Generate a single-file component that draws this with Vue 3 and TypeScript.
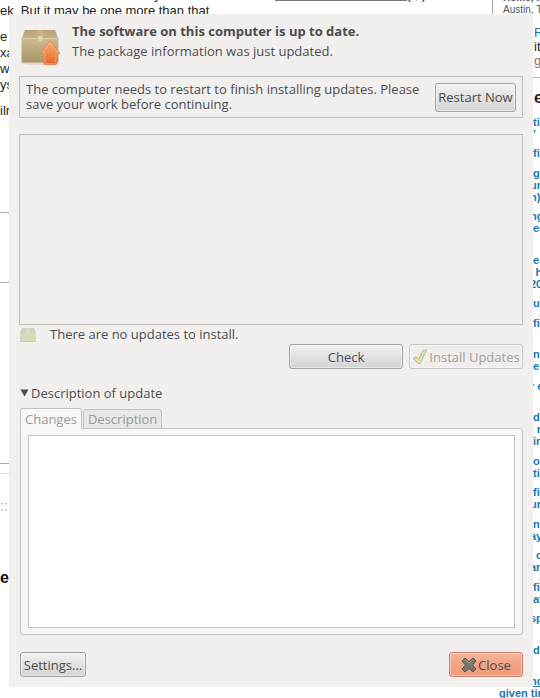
<script setup lang="ts">
import { ref } from 'vue'

type Tab = 'changes' | 'description'

interface Line {
  text: string
  tucked?: boolean
}

const activeTab = ref<Tab>('changes')
const expanded = ref(true)
const notes = ref('')

const leftLines: string[] = ['e', 'xa', 'w', 'ys']

// Tucked lines start a little further under the dialog's edge.
const linkGroups: Line[][] = [
  [{ text: 'ti' }, { text: '’' }],
  [{ text: 'fi' }],
  [{ text: 'g' }, { text: 'ur', tucked: true }, { text: 'n)', tucked: true }],
  [{ text: 'ng', tucked: true }, { text: 'er' }, { text: '' }],
  [{ text: 'e' }, { text: '’ h', tucked: true }, { text: '20', tucked: true }],
  [{ text: 'u' }],
  [{ text: 'fi' }, { text: '' }],
  [{ text: 'n' }, { text: 'e' }],
  [{ text: 'r e', tucked: true }, { text: '' }],
  [{ text: 'd' }, { text: ': r', tucked: true }, { text: 'in' }],
  [{ text: 'o' }, { text: 'ti' }],
  [{ text: 'fi' }, { text: 'ur', tucked: true }],
  [{ text: 'n' }, { text: 'ay', tucked: true }],
  [{ text: ', c', tucked: true }, { text: 'ar', tucked: true }],
  [{ text: 'fi' }, { text: 'at' }],
  [{ text: 'sp', tucked: true }, { text: '' }],
  [{ text: 'd' }, { text: '' }],
]
</script>

<template>
  <div class="desktop">
    <div class="page">
      <div class="article">
        <p class="cut-line"><span>y</span><u></u><span>( , )</span></p>
        <p class="lead"><span>ek</span><span>But it may be one more than that</span></p>
        <div class="left-lines">
          <p v-for="line in leftLines" :key="line">{{ line }}</p>
          <p class="spaced">ilr</p>
        </div>
        <div class="box box-a"></div>
        <div class="box box-b"></div>
        <div class="box box-c"></div>
        <div class="box box-d"></div>
        <div class="grip">::</div>
        <p class="left-heading">e</p>
      </div>
      <div class="sidebar">
        <div class="place">
          <p class="place-name">Home, in</p>
          <p>Austin, T</p>
        </div>
        <div class="card">
          <p class="card-name">R</p>
          <p class="card-text">it</p>
          <p class="card-meta">g</p>
        </div>
        <p class="side-heading">e</p>
        <div class="links">
          <div v-for="(group, i) in linkGroups" :key="i" class="link-group">
            <p v-for="(line, j) in group" :key="j" :class="{ tucked: line.tucked }">{{ line.text }}</p>
          </div>
          <div class="link-group">
            <p class="tucked"><u>nd</u></p>
            <p class="given">given tim</p>
          </div>
        </div>
      </div>
    </div>

    <main class="dialog">
      <header class="head">
        <svg class="package" viewBox="0 0 42 40" aria-hidden="true">
          <defs>
            <linearGradient id="box" x1="0" y1="0" x2="0" y2="1">
              <stop offset="0" stop-color="#cdbc94" />
              <stop offset="1" stop-color="#ab9469" />
            </linearGradient>
            <linearGradient id="lid" x1="0" y1="0" x2="0" y2="1">
              <stop offset="0" stop-color="#b99f78" />
              <stop offset="1" stop-color="#c8b28a" />
            </linearGradient>
            <linearGradient id="arrow" x1="0" y1="0" x2="0" y2="1">
              <stop offset="0" stop-color="#fbb07c" />
              <stop offset="0.5" stop-color="#f48c4c" />
              <stop offset="1" stop-color="#e2622a" />
            </linearGradient>
          </defs>
          <ellipse cx="21" cy="36" rx="20" ry="2" fill="#dedad4" />
          <path d="M2.500 11H39.500V34Q39.500 35.500 38 35.500H4Q2.500 35.500 2.500 34Z" fill="url(#box)" />
          <path d="M6 3H36L39.500 11.500H2.500Z" fill="url(#lid)" />
          <path d="M3 11.500H39" stroke="#d9c9a4" />
          <path d="M18 3H24L24.500 11H17.500Z" fill="#c8b189" />
          <path d="M19 9H23.500V14L22.500 13.500L21 15L20 13.500L19 14Z" fill="#e6d6ac" />
          <path d="M31 13.500L41 26.500H37.500V37.500H25V26.500H21.500Z" fill="url(#arrow)" stroke="#ec8248" stroke-width=".8" stroke-linejoin="round" />
          <path d="M31 15.500L39 25.500H36.500V36.500H26V25.500H23.500Z" fill="none" stroke="#ffc9a0" stroke-opacity=".45" />
        </svg>
        <div>
          <h1>The software on this computer is up to date.</h1>
          <p>The package information was just updated.</p>
        </div>
      </header>

      <section class="notice">
        <p>The computer needs to restart to finish installing updates. Please save your work before continuing.</p>
        <button type="button" class="btn restart">Restart Now</button>
      </section>

      <section class="updates" aria-label="Updates"></section>

      <div class="status">
        <svg class="mini" viewBox="0 0 16 14" aria-hidden="true">
          <path d="M2 0H14L16 5V13H0V5Z" fill="#d8d8c0" />
          <path d="M2 0H14L16 5H0Z" fill="#d3d0c6" />
          <path d="M7 0H9L10 6H6Z" fill="#dedbc4" />
          <path d="M3 13L8 9L13 4L16 6V13Z" fill="#dcdcac" />
          <path d="M0 13.500H16" stroke="#c9c9b8" />
        </svg>
        <p>There are no updates to install.</p>
      </div>

      <div class="actions">
        <button type="button" class="btn">Check</button>
        <button type="button" class="btn" disabled>
          <svg class="tick" viewBox="0 0 16 16" aria-hidden="true">
            <path d="M1.500 9.500L4 7.500L6.500 10.500L11 1.500L14.500 1L8 14.500H6Z" fill="#e0e6a6" stroke="#b3b98e" stroke-linejoin="round" />
          </svg>
          <span>Install Updates</span>
        </button>
      </div>

      <button type="button" class="expander" :aria-expanded="expanded" @click="expanded = !expanded">
        <svg viewBox="0 0 9 8" aria-hidden="true"><path d="M0.500 0.500H8.500L4.500 7.500Z" fill="#4c4c4c" /></svg>
        <span>Description of update</span>
      </button>

      <div class="tabs" role="tablist">
        <button type="button" role="tab" class="tab" :class="{ active: activeTab === 'changes' }" :aria-selected="activeTab === 'changes'" @click="activeTab = 'changes'">Changes</button>
        <button type="button" role="tab" class="tab" :class="{ active: activeTab === 'description' }" :aria-selected="activeTab === 'description'" @click="activeTab = 'description'">Description</button>
      </div>
      <section class="panel">
        <textarea v-model="notes" aria-label="Changes" readonly></textarea>
      </section>

      <footer class="foot">
        <button type="button" class="btn settings">Settings...</button>
        <button type="button" class="btn close">
          <svg class="cross" viewBox="0 0 16 16" aria-hidden="true">
            <path d="M4 1L8 4.500L12 1L15 4L11.500 8L15 12L12 15L8 11.500L4 15L1 12L4.500 8L1 4Z" fill="#77766a" stroke="#55504a" stroke-linejoin="round" />
            <path d="M4 2.500L8 6L12 2.500" fill="none" stroke="#a3a195" />
          </svg>
          <span>Close</span>
        </button>
      </footer>
    </main>
  </div>
</template>

<style>
body {
  margin: 0;
  background: #fff;
}
</style>

<style scoped>
* {
  box-sizing: border-box;
}
p,
h1 {
  margin: 0;
}
.desktop {
  position: relative;
  min-height: 100vh;
  padding: 14px 7px 11px 9px;
  overflow: hidden;
  background: #fff;
}

/* Web page behind the dialog */
.page {
  position: absolute;
  inset: 0;
  display: flex;
  overflow: hidden;
  white-space: nowrap;
  font-family: "Liberation Sans", Arial, sans-serif;
  font-size: 13px;
  color: #222;
}
.article {
  flex: 1;
  min-width: 0;
}
.cut-line {
  display: flex;
  height: 3px;
  padding-left: 154px;
  overflow: hidden;
  line-height: 16px;
  align-items: flex-end;
}
.cut-line u {
  align-self: flex-start;
  width: 132px;
  height: 1px;
  margin-left: 114px;
  background: #777;
}
.lead {
  display: flex;
  gap: 7px;
  height: 26px;
  line-height: 16px;
}
.left-lines p {
  height: 16px;
  line-height: 16px;
}
.left-lines .spaced {
  margin-top: 10px;
}
.box {
  width: 10px;
  border-bottom: 1px solid #aaa;
}
.box-a {
  height: 94px;
}
.box-b {
  height: 70px;
}
.box-c {
  height: 181px;
}
.box-d {
  height: 10px;
  border-bottom-color: #ddd;
}
.grip {
  height: 94px;
  padding-top: 22px;
  font-size: 14px;
  line-height: 20px;
  color: #aaa;
}
.left-heading {
  font-size: 16px;
  font-weight: bold;
  line-height: 20px;
  color: #111;
}
.sidebar {
  width: 48px;
}
.place {
  width: 48px;
  height: 26px;
  padding-left: 10px;
  border-left: 1px solid #aaa;
  font-size: 10px;
  line-height: 12px;
  color: #555;
}
.place-name {
  display: flex;
  align-items: flex-end;
  height: 4px;
  overflow: hidden;
  font-weight: bold;
}
.card {
  height: 52px;
  padding-left: 42px;
  border-bottom: 1px solid #bbb;
  line-height: 14px;
}
.card-name {
  color: #1a78ad;
}
.card-meta {
  color: #777;
}
.side-heading {
  height: 38px;
  padding-left: 42px;
  font-size: 16px;
  font-weight: bold;
  line-height: 40px;
}
.links {
  padding-left: 41px;
  font-size: 11px;
  font-weight: bold;
  line-height: 12px;
  color: #1a78ad;
}
.link-group {
  margin-bottom: 7px;
}
.link-group:nth-child(even) {
  margin-bottom: 8px;
}
.link-group p {
  height: 12px;
}
.link-group .tucked {
  margin-left: -3px;
}
.link-group .given {
  margin-left: -34px;
}

/* Dialog */
.dialog {
  position: relative;
  display: flex;
  flex-direction: column;
  min-height: calc(100vh - 25px);
  padding: 9px 10px 10px 10px;
  background: #f1f0ef;
  color: #4c4c4c;
  font-family: "Open Sans", "Noto Sans", sans-serif;
  font-size: 13px;
  line-height: 16px;
}
.head {
  display: flex;
  gap: 11px;
  height: 53px;
}
.package {
  width: 42px;
  height: 40px;
  margin-top: 4px;
}
.head h1 {
  font-size: 13px;
  font-weight: bold;
  line-height: 16px;
  margin-bottom: 4px;
}
.notice {
  display: flex;
  align-items: center;
  gap: 4px;
  height: 42px;
  padding: 0 6px;
  border: 1px solid #c4c2c0;
}
.notice p {
  flex: 1;
  line-height: 15px;
}
.btn {
  display: inline-flex;
  align-items: center;
  justify-content: center;
  gap: 1px;
  height: 25px;
  padding: 0 2px;
  border: 1px solid #a3a3a2;
  border-radius: 3px;
  background: linear-gradient(#f3f3f2, #e2e2e1 50%, #d4d4d3);
  box-shadow: inset 0 0 0 1px rgba(255, 255, 255, 0.45);
  color: #4c4c4c;
  font: inherit;
  white-space: nowrap;
}
.btn:disabled {
  border-color: #c8c7c5;
  background: #efeeec;
  color: #a0a09e;
}
.restart {
  width: 81px;
  height: 29px;
}
.updates {
  flex: 1 1 191px;
  margin-top: 16px;
  border: 1px solid #c4c2c0;
}
.status {
  display: flex;
  gap: 14px;
  height: 19px;
  padding: 1px 0 0 1px;
}
.mini {
  width: 16px;
  height: 14px;
  margin-top: 2px;
}
.actions {
  display: flex;
  justify-content: flex-end;
  gap: 6px;
}
.actions .btn {
  width: 114px;
}
.tick {
  width: 16px;
  height: 16px;
}
.expander {
  display: flex;
  align-items: center;
  align-self: flex-start;
  gap: 2px;
  height: 16px;
  margin-top: 16px;
  padding: 0 1px;
  border: 0;
  background: none;
  color: inherit;
  font: inherit;
}
.expander svg {
  width: 9px;
  height: 8px;
}
.tabs {
  display: flex;
  align-items: flex-end;
  gap: 1px;
  height: 21px;
  margin: 7px 0 -1px 1px;
}
.tab {
  position: relative;
  height: 20px;
  padding: 0 4px;
  border: 1px solid #c4c2c0;
  border-radius: 3px 3px 0 0;
  background: #e9e8e6;
  color: #9a9a98;
  font: inherit;
}
.tab.active {
  height: 21px;
  border-bottom-color: #f8f8f7;
  background: #f8f8f7;
}
.panel {
  display: flex;
  flex: 1 1 207px;
  margin-left: 1px;
  padding: 6px 7px;
  border: 1px solid #c4c2c0;
  border-radius: 0 3px 3px 3px;
  background: #f7f7f6;
}
.panel textarea {
  flex: 1;
  min-width: 0;
  padding: 4px;
  border: 1px solid #c4c2c0;
  background: #fff;
  color: inherit;
  font: inherit;
  resize: none;
}
.foot {
  display: flex;
  justify-content: space-between;
  margin-top: 17px;
  padding-left: 1px;
}
.settings {
  min-width: 66px;
}
.close {
  width: 74px;
  border-color: #c98068;
  background: linear-gradient(#f7b59c, #f2a384 50%, #ee9a7a);
}
.cross {
  width: 16px;
  height: 16px;
}
</style>
